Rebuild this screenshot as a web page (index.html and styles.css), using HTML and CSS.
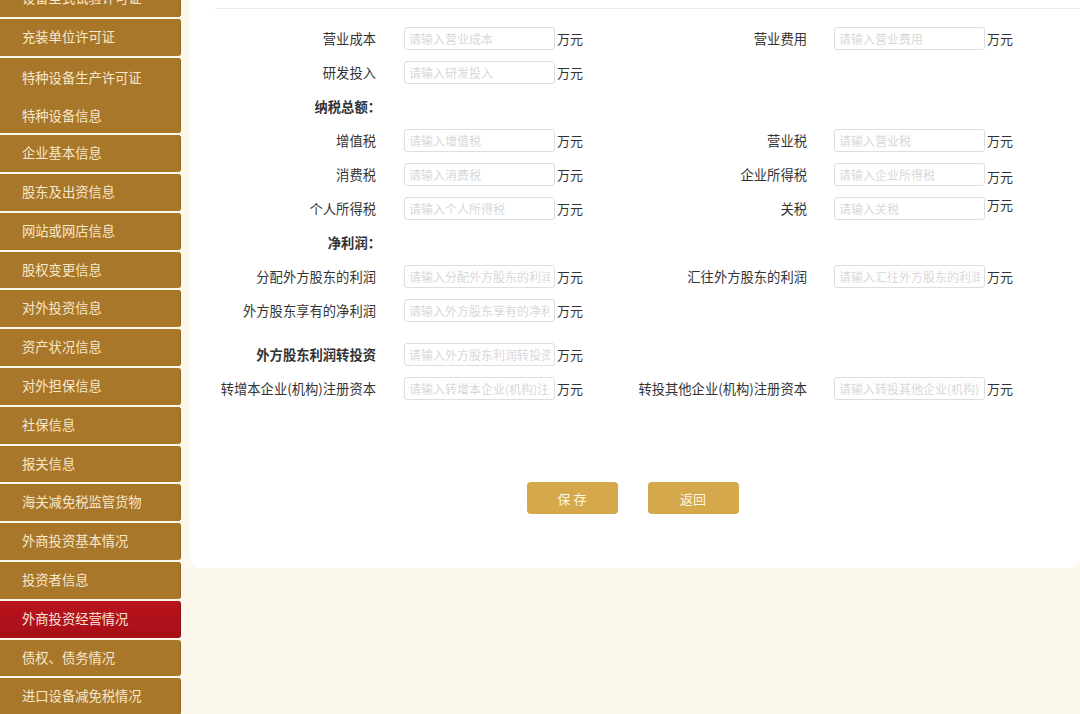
FILE: index.html
```html
<!DOCTYPE html>
<html lang="zh-CN">
<head>
<meta charset="utf-8">
<title>外商投资经营情况</title>
<link rel="stylesheet" href="styles.css">
</head>
<body>
<div class="page">
  <aside class="sidebar">
    <ul class="menu">
      <li class="item">设备型式试验许可证</li>
      <li class="item">充装单位许可证</li>
      <li class="item joined">特种设备生产许可证</li>
      <li class="item joined-next">特种设备信息</li>
      <li class="item">企业基本信息</li>
      <li class="item">股东及出资信息</li>
      <li class="item">网站或网店信息</li>
      <li class="item">股权变更信息</li>
      <li class="item">对外投资信息</li>
      <li class="item">资产状况信息</li>
      <li class="item">对外担保信息</li>
      <li class="item">社保信息</li>
      <li class="item">报关信息</li>
      <li class="item">海关减免税监管货物</li>
      <li class="item">外商投资基本情况</li>
      <li class="item">投资者信息</li>
      <li class="item active">外商投资经营情况</li>
      <li class="item">债权、债务情况</li>
      <li class="item">进口设备减免税情况</li>
    </ul>
  </aside>
  <main class="card">
    <div class="card-top"></div>
    <form class="form">
      <div class="row">
        <div class="field left"><label class="label">营业成本</label><input class="input" placeholder="请输入营业成本"><span class="unit">万元</span></div>
        <div class="field right"><label class="label">营业费用</label><input class="input" placeholder="请输入营业费用"><span class="unit">万元</span></div>
      </div>
      <div class="row">
        <div class="field left"><label class="label">研发投入</label><input class="input" placeholder="请输入研发投入"><span class="unit">万元</span></div>
      </div>
      <div class="row title-row">
        <div class="label left title">纳税总额：</div>
      </div>
      <div class="row">
        <div class="field left"><label class="label">增值税</label><input class="input" placeholder="请输入增值税"><span class="unit">万元</span></div>
        <div class="field right"><label class="label">营业税</label><input class="input" placeholder="请输入营业税"><span class="unit">万元</span></div>
      </div>
      <div class="row">
        <div class="field left"><label class="label">消费税</label><input class="input" placeholder="请输入消费税"><span class="unit">万元</span></div>
        <div class="field right"><label class="label">企业所得税</label><input class="input" placeholder="请输入企业所得税"><span class="unit low">万元</span></div>
      </div>
      <div class="row">
        <div class="field left"><label class="label">个人所得税</label><input class="input" placeholder="请输入个人所得税"><span class="unit">万元</span></div>
        <div class="field right"><label class="label">关税</label><input class="input" placeholder="请输入关税"><span class="unit high">万元</span></div>
      </div>
      <div class="row title-row">
        <div class="label left title">净利润：</div>
      </div>
      <div class="row">
        <div class="field left"><label class="label">分配外方股东的利润</label><input class="input" placeholder="请输入分配外方股东的利润"><span class="unit">万元</span></div>
        <div class="field right"><label class="label">汇往外方股东的利润</label><input class="input" placeholder="请输入汇往外方股东的利润"><span class="unit">万元</span></div>
      </div>
      <div class="row">
        <div class="field left"><label class="label">外方股东享有的净利润</label><input class="input" placeholder="请输入外方股东享有的净利润"><span class="unit">万元</span></div>
      </div>
      <div class="row spaced">
        <div class="field left"><label class="label strong">外方股东利润转投资</label><input class="input" placeholder="请输入外方股东利润转投资"><span class="unit">万元</span></div>
      </div>
      <div class="row">
        <div class="field left"><label class="label">转增本企业(机构)注册资本</label><input class="input" placeholder="请输入转增本企业(机构)注册资本"><span class="unit">万元</span></div>
        <div class="field right"><label class="label">转投其他企业(机构)注册资本</label><input class="input" placeholder="请输入转投其他企业(机构)注册资本"><span class="unit">万元</span></div>
      </div>
      <div class="actions">
        <button type="button" class="btn">保 存</button>
        <button type="button" class="btn">返回</button>
      </div>
    </form>
  </main>
</div>
</body>
</html>
```

FILE: styles.css
```css
* { box-sizing: border-box; }
html, body {
  margin: 0;
  padding: 0;
  background: #fdf8ec;
  font-family: "Microsoft YaHei", "Noto Sans CJK SC", "Noto Sans", sans-serif;
  height: 100%;
  overflow: hidden;
}
.page {
  display: flex;
  align-items: flex-start;
  gap: 9px;
  height: 714px;
}
.sidebar {
  width: 181px;
  flex: none;
  height: 714px;
  overflow: hidden;
}
.menu {
  list-style: none;
  margin: -20px 0 0 0;
  padding: 0;
  display: flex;
  flex-direction: column;
}
.item {
  height: 36.8px;
  margin-bottom: 2px;
  background: #a9772a;
  color: #f7e8cb;
  font-size: 13.3px;
  line-height: 36.8px;
  padding-left: 22px;
  border-radius: 0 3px 3px 0;
  border-right: 1px solid #93661f;
  white-space: nowrap;
}
.item.joined {
  margin-bottom: 0;
  height: 36.8px;
  line-height: 40px;
  border-radius: 0 3px 0 0;
}
.item.joined-next {
  height: 38.8px;
  line-height: 44px;
  border-radius: 0 0 3px 0;
}
.item.active {
  background: linear-gradient(#b8141d, #a80f17);
  color: #f9e2d8;
  border-right-color: #8c0c12;
}
.card {
  flex: 1;
  background: #ffffff;
  height: 568px;
  border-radius: 0 0 10px 10px;
}
.card-top {
  height: 9px;
  margin-left: 25px;
  border-bottom: 1px solid #ececec;
}
.form {
  margin-top: 12px;
}
.row {
  display: flex;
  align-items: center;
  height: 34px;
}
.row.spaced {
  margin-top: 10px;
}
.field {
  display: flex;
  align-items: center;
}
.label {
  font-size: 13.3px;
  color: #333;
  text-align: right;
  white-space: nowrap;
  flex: none;
}
.field.left .label,
.label.left {
  width: 186px;
  margin-right: 28px;
}
.field.right .label {
  width: 222px;
  margin-right: 27px;
}
.label.title {
  font-weight: bold;
  width: 191px;
  margin-right: 0;
}
.label.strong {
  font-weight: bold;
}
.input {
  width: 151px;
  height: 23px;
  border: 1px solid #dedede;
  border-radius: 3px;
  padding: 0 4px;
  font-size: 12px;
  font-family: inherit;
  color: #333;
  background: #fff;
  outline: none;
}
.input::placeholder {
  color: #d8d8d8;
}
.unit {
  width: 28px;
  margin-left: 2px;
  font-size: 13px;
  color: #333;
  white-space: nowrap;
}
.unit.low { position: relative; top: 2px; }
.unit.high { position: relative; top: -4px; }
.actions {
  display: flex;
  justify-content: center;
  gap: 30px;
  margin-top: 77px;
  padding-right: 5px;
}
.btn {
  width: 91px;
  height: 32px;
  border: none;
  border-radius: 4px;
  background: #d5a84c;
  color: #fff7e4;
  font-size: 13px;
  font-family: inherit;
  cursor: pointer;
}
```
